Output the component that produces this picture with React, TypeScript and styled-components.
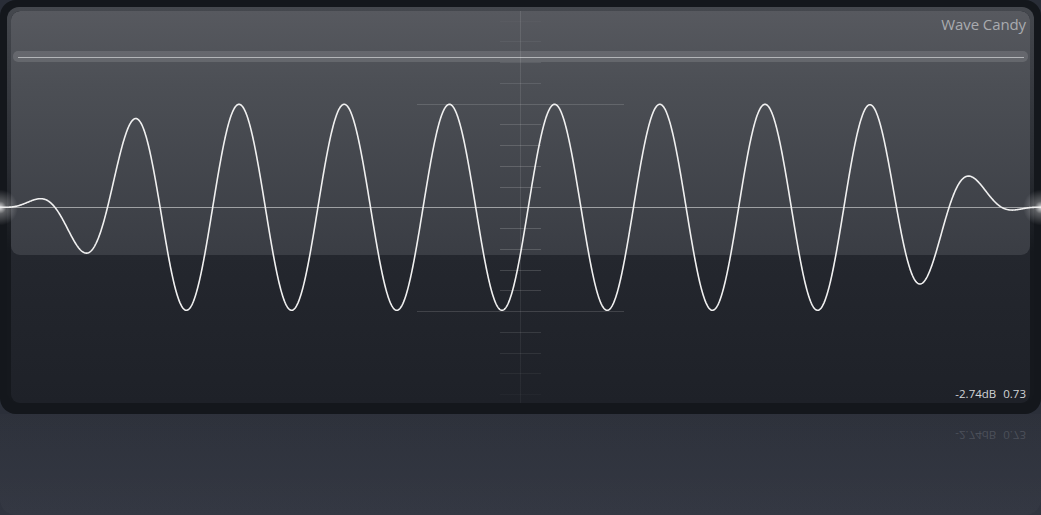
import React from "react";
import styled, { createGlobalStyle } from "styled-components";

const GlobalStyle = createGlobalStyle`
  html, body { margin: 0; padding: 0; }
  body {
    background: linear-gradient(180deg, #292d37 0%, #2b2f39 80%, #30343f 100%);
    font-family: "Open Sans", "Noto Sans", sans-serif;
    overflow: hidden;
  }
`;

const Stage = styled.div`
  width: 1041px;
  height: 515px;
  display: flex;
  flex-direction: column;
`;

const Frame = styled.div`
  position: relative;
  width: 1041px;
  height: 414px;
  box-sizing: border-box;
  padding: 7px 7px 11px 7px;
  background: #14171c;
  border-radius: 16px;
  display: flex;
`;

const Panel = styled.div`
  flex: 1;
  display: flex;
  padding: 4px 4px 0 4px;
  border-radius: 12px;
  background: linear-gradient(180deg, #45484e 0%, #2a2d33 40%, #15181d 62%, #15181d 100%);
`;

const Screen = styled.div`
  flex: 1;
  display: flex;
  flex-direction: column;
  border-radius: 9px;
  background: linear-gradient(180deg, #2a2d34 0%, #24272e 62%, #1e2128 100%);
  overflow: hidden;
`;

const Gloss = styled.div`
  height: 244px;
  flex: none;
  display: flex;
  flex-direction: column;
  padding: 0 2px;
  border-radius: 9px;
  background: linear-gradient(180deg, #57595f 0%, #4c4f55 30%, #3a3d44 100%);
`;

const TitleRow = styled.div`
  height: 40px;
  display: flex;
  justify-content: flex-end;
  align-items: flex-start;
  padding: 3px 2px 0 0;
  box-sizing: border-box;
`;

const Title = styled.span`
  font-family: "Open Sans", "Noto Sans", sans-serif;
  font-size: 15px;
  line-height: 21px;
  color: #a9abaf;
  letter-spacing: -0.1px;
`;

const Bar = styled.div`
  height: 11px;
  border-radius: 5px;
  background: rgba(255, 255, 255, 0.12);
  display: flex;
  align-items: center;
  padding: 0 4px 0 5px;
`;

const BarLine = styled.div`
  flex: 1;
  height: 1px;
  margin-top: 1px;
  background: #b3b5b8;
`;

const Spacer = styled.div`
  flex: 1;
`;

const Readout = styled.div`
  display: flex;
  justify-content: flex-end;
  gap: 7px;
  padding: 0 4px 1px 0;
  font-family: "Open Sans", "Noto Sans", sans-serif;
  font-size: 11.5px;
  line-height: 16px;
  color: #d2d4d7;
`;

const Reflection = styled.div`
  flex: 1;
  display: flex;
  padding: 0 7px 0 7px;
  border-radius: 0 0 16px 16px;
  background: linear-gradient(180deg, rgba(255,255,255,0.012), rgba(255,255,255,0.02));
`;

const ReflectionScreen = styled.div`
  flex: 1;
  display: flex;
  flex-direction: column;
  padding: 13px 4px 0 4px;
`;

const MirrorText = styled.div`
  display: flex;
  justify-content: flex-end;
  gap: 7px;
  padding: 0 4px 0 0;
  font-family: "Open Sans", "Noto Sans", sans-serif;
  font-size: 11.5px;
  line-height: 16px;
  color: #4c505a;
  transform: scaleY(-1);
`;

const Overlay = styled.svg`
  position: absolute;
  left: 0;
  top: 0;
  width: 1041px;
  height: 414px;
  pointer-events: none;
  overflow: visible;
`;

const CY = 207.3;
const A = 103;
const P = 105.2;
const X0 = 212.7;

function amp(x: number): number {
  if (x < 3) return 0;
  if (x < 177) return (A * (1 - Math.cos((Math.PI * (x - 3)) / 174))) / 2;
  if (x < 863) return A;
  if (x < 1036) return (A * (1 + Math.cos((Math.PI * (x - 863)) / 173))) / 2;
  return 0;
}

function wavePath(): string {
  const pts: string[] = [];
  for (let x = 0; x <= 1041; x += 0.5) {
    const y = CY - amp(x) * Math.sin((2 * Math.PI * (x - X0)) / P);
    pts.push(`${x.toFixed(1)},${y.toFixed(2)}`);
  }
  return "M" + pts.join(" L");
}

const Scope: React.FC = () => {
  const ticks: React.ReactNode[] = [];
  for (let k = -9; k <= 9; k++) {
    if (k === 0) continue;
    const y = Math.round(CY + k * 20.75) + 0.5;
    const d = Math.abs(k * 20.75);
    if (Math.abs(k) === 5) {
      ticks.push(
        <line key={k} x1={417} x2={624} y1={y} y2={y} stroke="#ffffff" strokeOpacity={0.14} strokeWidth={1} shapeRendering="crispEdges" />
      );
    } else {
      const op = Math.max(0.02, 0.17 * (1 - Math.pow(d / 200, 2)));
      ticks.push(
        <line key={k} x1={500} x2={541} y1={y} y2={y} stroke="#ffffff" strokeOpacity={op} strokeWidth={1} shapeRendering="crispEdges" />
      );
    }
  }
  return (
    <Overlay viewBox="0 0 1041 414">
      <defs>
        <radialGradient id="glow" cx="0.5" cy="0.5" r="0.5">
          <stop offset="0" stopColor="#ffffff" stopOpacity="0.85" />
          <stop offset="0.35" stopColor="#ffffff" stopOpacity="0.3" />
          <stop offset="1" stopColor="#ffffff" stopOpacity="0" />
        </radialGradient>
        <linearGradient id="axis" x1="0" y1="0" x2="0" y2="1">
          <stop offset="0" stopColor="#ffffff" stopOpacity="0.1" />
          <stop offset="0.6" stopColor="#ffffff" stopOpacity="0.1" />
          <stop offset="1" stopColor="#ffffff" stopOpacity="0.04" />
        </linearGradient>
      </defs>
      <rect x={520} y={11} width={1} height={392} fill="url(#axis)" />
      {ticks}
      <line x1={0} x2={1041} y1={207.5} y2={207.5} stroke="#ffffff" strokeOpacity={0.5} strokeWidth={1} shapeRendering="crispEdges" />
      <ellipse cx={0} cy={207.5} rx={18} ry={18} fill="url(#glow)" />
      <ellipse cx={1041} cy={207.5} rx={18} ry={18} fill="url(#glow)" />
      <path d={wavePath()} fill="none" stroke="#f0f0f0" strokeWidth={1.6} strokeLinejoin="round" />
    </Overlay>
  );
};

export default function App() {
  return (
    <>
      <GlobalStyle />
      <Stage>
        <Frame>
          <Panel>
            <Screen>
              <Gloss>
                <TitleRow>
                  <Title>Wave Candy</Title>
                </TitleRow>
                <Bar>
                  <BarLine />
                </Bar>
              </Gloss>
              <Spacer />
              <Readout>
                <span>-2.74dB</span>
                <span>0.73</span>
              </Readout>
            </Screen>
          </Panel>
          <Scope />
        </Frame>
        <Reflection>
          <ReflectionScreen>
            <MirrorText>
              <span>-2.74dB</span>
              <span>0.73</span>
            </MirrorText>
          </ReflectionScreen>
        </Reflection>
      </Stage>
    </>
  );
}
